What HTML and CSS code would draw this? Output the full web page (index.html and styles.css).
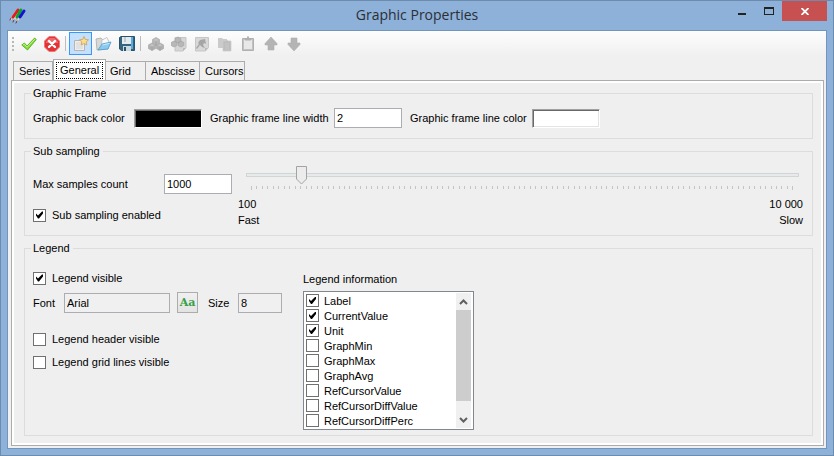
FILE: index.html
```html
<!DOCTYPE html>
<html lang="en">
<head>
<meta charset="utf-8">
<title>Graphic Properties</title>
<link rel="stylesheet" href="styles.css">
</head>
<body>
<div class="window">
  <header class="titlebar">
    <svg class="app-icon" width="18" height="17" viewBox="0 0 18 17">
      <g fill="none" stroke-linecap="round">
        <path d="M2 12l5-7" stroke="#eddcd4" stroke-width="2"/><path d="M4 10l5-7" stroke="#e21c1c" stroke-width="3"/>
        <path d="M5 13l5-7" stroke="#d8d5cb" stroke-width="2"/><path d="M8 10l4-7" stroke="#07a52c" stroke-width="3"/>
        <path d="M8 14l4-5" stroke="#d8cfc8" stroke-width="2"/><path d="M11 10l4-6" stroke="#1512cc" stroke-width="3"/>
        <path d="M1 13l1-2M4 15l1-2M7 16l1-2" stroke="#5d3535" stroke-width="1"/>
      </g>
    </svg>
    <h1 class="title">Graphic Properties</h1>
    <div class="caption-buttons">
      <button class="caption" aria-label="Minimize"><svg width="8" height="12"><path d="M0 8h8v2H0z" fill="#222"/></svg></button>
      <button class="caption" aria-label="Maximize"><svg width="10" height="8"><path d="M0 0h10v8H0zM1 2v5h8V2z" fill="#222" fill-rule="evenodd"/></svg></button>
      <button class="caption close" aria-label="Close"><svg width="8" height="7" viewBox="0 0 8 7"><path d="M.5 0L7.500 7M7.500 0L.5 7" stroke="#fff" stroke-width="1.800"/></svg></button>
    </div>
  </header>
  <main class="client">
    <div class="toolbar">
      <svg class="grip" width="4" height="16"><path d="M1 1h2v2H1zM1 5h2v2H1zM1 9h2v2H1zM1 13h2v2H1z" fill="#b8b8b8"/></svg>
      <button class="tool" aria-label="Apply"><svg width="16" height="16" viewBox="0 0 16 16"><path d="M.8 9l2.600-2 2.600 3L13.600 2l1.700 1.500L6.500 14z" fill="#82dc32" stroke="#4fa51b" stroke-width=".8"/><path d="M2 9l1.300-.8L6 11.200 13.800 3.200" stroke="#c0f583" fill="none"/></svg></button>
      <button class="tool" aria-label="Cancel"><svg width="16" height="16" viewBox="0 0 16 16"><path d="M5 .5h6L15.500 5v6L11 15.500H5L.5 11V5z" fill="#e33134" stroke="#e77"/><path d="M2 7V5.500L5.500 2h5L14 5.500V7z" fill="#f0686b"/><path d="M5 5l6 6M11 5l-6 6" stroke="#fff" stroke-width="2.400" stroke-linecap="round"/></svg></button>
      <span class="separator"></span>
      <button class="tool active" aria-label="New"><svg width="16" height="16" viewBox="0 0 16 16"><path d="M1.500 4.500h10v10h-10z" fill="#eee" stroke="#b5b5b5"/><path d="M3 6h7v7H3z" fill="#e1e1e1"/><path d="M11 .5l1.300 2.900 3.200.4-2.300 2.100.6 3.100L11 7.500 8.200 9l.6-3.100L6.500 3.800l3.200-.4z" fill="#fbdc91" stroke="#cf9f4c" stroke-width=".8"/></svg></button>
      <button class="tool" aria-label="Open"><svg width="17" height="16" viewBox="0 0 17 16"><path d="M1 3l5-1 1 1.500L13 4v9L2 14z" fill="#d7d8d8" stroke="#aaa" stroke-width=".8"/><path d="M7 4l5-2.500L14 6l-2 6H6z" fill="#fafafa" stroke="#bbb" stroke-width=".8"/><path d="M3 14L7 8l9-2-3 7z" fill="#8cc9ef" stroke="#4d9acd" stroke-width=".8"/><path d="M7.500 9l7-1.600" stroke="#c9eafc"/></svg></button>
      <button class="tool" aria-label="Save"><svg width="16" height="16" viewBox="0 0 16 16"><path d="M.5 1.500L2 .5h13.500v14h-13L.5 13z" fill="#34647e" stroke="#28536c"/><path d="M3 1h9v7H3z" fill="#e3e9ec"/><path d="M5 1h2v5H5z" fill="#bdcbd1"/><path d="M12 1h2v12h-2z" fill="#56aee0"/><path d="M4 10h8v5H4z" fill="#cbd8df"/><path d="M5 11h2v4H5z" fill="#28536c"/></svg></button>
      <span class="separator"></span>
      <button class="tool" aria-label="Add curve" disabled><svg width="16" height="16" viewBox="0 0 16 16"><g stroke="#aaa" stroke-width=".7"><path d="M8 1.500l3.500 2v4L8 9.500l-3.500-2v-4z" fill="#b6b6b6"/><path d="M4 7l3.700 2v3.500L4 14.500l-3.700-2V9zM12 7l3.700 2v3.500L12 14.500l-3.700-2V9z" fill="#b0b0b0"/></g><path d="M8 5.500v4M4 10.500v4M12 10.500v4" stroke="#a2a2a2"/><path d="M5.500 4L8 5l2.500-1L8 2.500zM1.500 9.200L4 10.500l2.500-1.300L4 8zM9.500 9.200l2.500 1.300 2.500-1.300L12 8z" fill="#c4c4c4"/></svg></button>
      <button class="tool" aria-label="Duplicate curve" disabled><svg width="16" height="16" viewBox="0 0 16 16"><path d="M4 1.500h11v10l-3 3.500H4z" fill="#d6d6d6" stroke="#c4c4c4"/><g fill="#b8b8b8" stroke="#a4a4a4" stroke-width=".7"><path d="M7 1l2.800 1.500v3L7 7 4.200 5.500v-3zM3 5l2.800 1.500v3L3 11 .2 9.500v-3zM10 5l2.800 1.500v3L10 11 7.200 9.500v-3z"/></g><path d="M12 15v-3h3z" fill="#bbb"/></svg></button>
      <button class="tool" aria-label="Edit curve" disabled><svg width="16" height="16" viewBox="0 0 16 16"><path d="M1.500 1.500h13v10l-3 3.500h-10z" fill="#d8d8d8" stroke="#c6c6c6"/><path d="M6 4l5-1 1 5-2-1-1 2 2 3-3-1-2-2-3 4-1-1 3-4-1-1z" fill="#a6a6a6"/><path d="M11 15v-3h3z" fill="#bbb"/></svg></button>
      <button class="tool" aria-label="Copy" disabled><svg width="16" height="16" viewBox="0 0 16 16"><path d="M1 2h4l1 1h4v9H1z" fill="#cbcbcb"/><path d="M6 5h3l1-1 1 1h3v10H6z" fill="#bdbdbd" stroke="#ccc" stroke-width=".7"/><path d="M3 4v6M9 7v7M11 7v7" stroke="#c9c9c9"/></svg></button>
      <button class="tool" aria-label="Paste" disabled><svg width="16" height="16" viewBox="0 0 16 16"><path d="M2.500 2.500h11v12h-11z" fill="#c2c2c2" stroke="#b0b0b0"/><path d="M4 4h8v9H4z" fill="#e8e8e8"/><path d="M5 2h2V.5h2V2h2v2.500H5z" fill="#b0b0b0"/></svg></button>
      <button class="tool" aria-label="Move up" disabled><svg width="16" height="16" viewBox="0 0 16 16"><path d="M8 1l6 6.500V9h-3v5H5V9H2V7.500z" fill="#b4b4b4" stroke="#b0b0b0" stroke-width=".6"/></svg></button>
      <button class="tool" aria-label="Move down" disabled><svg width="16" height="16" viewBox="0 0 16 16"><path d="M8 15l6-6.500V7h-3V2H5v5H2v1.500z" fill="#b4b4b4" stroke="#b0b0b0" stroke-width=".6"/></svg></button>
    </div>
    <div class="tabs" role="tablist">
      <button class="tab tab-series" role="tab">Series</button>
      <button class="tab tab-general selected" role="tab" aria-selected="true"><span class="focus">General</span></button>
      <button class="tab tab-grid" role="tab">Grid</button>
      <button class="tab tab-abscisse" role="tab">Abscisse</button>
      <button class="tab tab-cursors" role="tab">Cursors</button>
    </div>
    <div class="page" role="tabpanel">
      <fieldset class="group">
        <legend>Graphic Frame</legend>
        <div class="frame-row">
          <label for="back-color">Graphic back color</label>
          <button class="swatch black" id="back-color"></button>
          <label for="line-width">Graphic frame line width</label>
          <input class="field" id="line-width" value="2">
          <label for="line-color">Graphic frame line color</label>
          <button class="swatch white" id="line-color"></button>
        </div>
      </fieldset>
      <fieldset class="group">
        <legend>Sub sampling</legend>
        <div class="sampling">
          <div class="sampling-left">
            <div class="count-row">
              <label for="max-samples">Max samples count</label>
              <input class="field" id="max-samples" value="1000">
            </div>
            <label class="check"><input type="checkbox" checked>Sub sampling enabled</label>
          </div>
          <div class="sampling-right">
            <input class="slider" type="range" min="100" max="10000" step="100" value="1000" aria-label="Max samples count">
            <div class="ticks" id="ticks"></div>
            <div class="scale"><span>100</span><span>10 000</span></div>
            <div class="scale"><span>Fast</span><span>Slow</span></div>
          </div>
        </div>
      </fieldset>
      <fieldset class="group grow">
        <legend>Legend</legend>
        <div class="legend-body">
          <div class="legend-left">
            <label class="check"><input type="checkbox" checked>Legend visible</label>
            <div class="font-row">
              <label class="font-label" for="font-name">Font</label>
              <input class="field font-name" id="font-name" value="Arial" readonly>
              <button class="font-button" aria-label="Choose font">Aa</button>
              <label class="size-label" for="font-size">Size</label>
              <input class="field font-size" id="font-size" value="8" readonly>
            </div>
            <label class="check header-check"><input type="checkbox">Legend header visible</label>
            <label class="check grid-check"><input type="checkbox">Legend grid lines visible</label>
          </div>
          <div class="legend-right">
            <div class="list-title" id="list-title">Legend information</div>
            <div class="list" role="group" aria-labelledby="list-title">
              <div class="items">
                <label class="item"><input type="checkbox" checked>Label</label>
                <label class="item"><input type="checkbox" checked>CurrentValue</label>
                <label class="item"><input type="checkbox" checked>Unit</label>
                <label class="item"><input type="checkbox">GraphMin</label>
                <label class="item"><input type="checkbox">GraphMax</label>
                <label class="item"><input type="checkbox">GraphAvg</label>
                <label class="item"><input type="checkbox">RefCursorValue</label>
                <label class="item"><input type="checkbox">RefCursorDiffValue</label>
                <label class="item"><input type="checkbox">RefCursorDiffPerc</label>
              </div>
              <div class="scrollbar">
                <button class="arrow" aria-label="Scroll up"><svg width="9" height="6"><path d="M1 5l3.500-3.500L8 5" fill="none" stroke="#606060" stroke-width="2"/></svg></button>
                <div class="thumb"></div>
                <button class="arrow" aria-label="Scroll down"><svg width="9" height="6"><path d="M1 1l3.500 3.500L8 1" fill="none" stroke="#606060" stroke-width="2"/></svg></button>
              </div>
            </div>
          </div>
        </div>
      </fieldset>
    </div>
  </main>
</div>
<script src="ticks.js"></script>
</body>
</html>
```
FILE: ticks.js
```js
// One tick for each slider step from 100 to 10 000.
const ticks = document.getElementById("ticks");
for (let value = 100; value <= 10000; value += 100) {
  ticks.appendChild(document.createElement("span"));
}
```
FILE: styles.css
```css
* { box-sizing: border-box; }

body {
  margin: 0;
  font: 11px/14px "Liberation Sans", Arial, sans-serif;
  color: #000;
}

button, input {
  font: inherit;
  color: inherit;
  margin: 0;
  padding: 0;
  border: 0;
  border-radius: 0;
  background: none;
}

svg { display: block; flex: none; }

label { white-space: nowrap; }

.window {
  min-height: 100vh;
  display: flex;
  flex-direction: column;
  padding: 0 6px 6px;
  background: #8db1d9;
  border: 1px solid #6d8bac;
}

/* Title bar */
.titlebar {
  height: 29px;
  display: grid;
  grid-template-columns: 1fr auto 1fr;
  align-items: start;
}
.app-icon { margin: 6px 0 0 2px; }
.title {
  margin: 0;
  font: 14px/28px "Open Sans", "Noto Sans", sans-serif;
  color: #2b2f35;
}
.caption-buttons { display: flex; justify-content: flex-end; }
.caption {
  width: 27px;
  height: 20px;
  display: flex;
  align-items: center;
  justify-content: center;
}
.caption.close { width: 45px; background: #c75050; }

.client {
  flex: 1;
  display: flex;
  flex-direction: column;
  background: #f0f0f0;
  border: 1px solid #7195bb;
}

/* Toolbar */
.toolbar {
  height: 25px;
  display: flex;
  align-items: center;
  padding-left: 3px;
  background: linear-gradient(#fdfdfd, #f0f0f0);
}
.grip { margin-right: 2px; }
.tool {
  width: 23px;
  height: 23px;
  display: flex;
  align-items: center;
  justify-content: center;
}
.tool.active { background: #c4e0fc; border: 1px solid #3399ff; }
.separator { width: 1px; height: 15px; margin: 0 3px 0 2px; background: #bdbdbd; }

/* Tabs */
.tabs {
  height: 24px;
  display: flex;
  align-items: flex-end;
  padding-left: 5px;
}
.tab {
  height: 19px;
  padding-left: 5px;
  text-align: left;
  border: 1px solid #acacac;
  border-bottom: 0;
  border-left-width: 0;
}
.tab-series { width: 40px; border-left-width: 1px; }
.tab-general { width: 53px; }
.tab-grid { width: 40px; padding-left: 4px; }
.tab-abscisse { width: 54px; }
.tab-cursors { width: 45px; }
.tab.selected {
  height: 22px;
  margin-bottom: -1px;
  padding: 0 2px;
  background: #fff;
  border-left-width: 1px;
}
.focus {
  display: block;
  padding-left: 3px;
  line-height: 15px;
  border: 1px dotted #000;
}

.page {
  flex: 1;
  display: flex;
  flex-direction: column;
  gap: 5px;
  margin: 0 2px 2px 3px;
  padding: 5px 10px 9px 12px;
  background: #efefef;
  border: 1px solid #acacac;
  box-shadow: inset 0 0 0 2px #fff;
}

/* Groups */
.group {
  min-width: 0;
  margin: 0;
  padding: 0 9px 0 8px;
  border: 1px solid #dcdcdc;
}
.group legend { padding: 0 3px 0 2px; margin-left: -2px; }
.group.grow { flex: 1; }

.field {
  width: 68px;
  height: 20px;
  padding: 0 2px;
  background: #fff;
  border: 1px solid #abadb3;
}
.field:read-only { background: #f0f0f0; }

.frame-row {
  display: grid;
  grid-template-columns: 101px 76px 124px 76px 122px 68px;
  align-items: center;
  padding: 8px 0 10px;
}
.swatch {
  width: 68px;
  height: 19px;
  border: 1px solid;
  border-color: #a0a0a0 #fff #fff #a0a0a0;
}
.swatch.black { background: #000; box-shadow: inset 1px 1px #696969; }
.swatch.white { background: #fff; box-shadow: inset 1px 1px #696969, inset -1px -1px #e3e3e3; }

.check, .item { display: flex; align-items: center; }
.check { gap: 6px; height: 14px; }

input[type="checkbox"] {
  appearance: none;
  flex: none;
  width: 13px;
  height: 13px;
  background: #fff;
  border: 1px solid #707070;
}
input[type="checkbox"]:checked::before {
  content: "";
  display: block;
  width: 11px;
  height: 11px;
  background: #000;
  clip-path: polygon(2px 4px, 4px 6px, 8px 2px, 9px 2px, 9px 4px, 5px 9px, 4px 9px, 2px 6px);
}

/* Sub sampling */
.sampling { display: flex; padding-bottom: 7px; }
.sampling-left { width: 205px; padding-top: 16px; }
.count-row { display: flex; align-items: center; margin-bottom: 14px; }
.count-row label { width: 131px; }
.sampling-right { flex: 1; padding-top: 7px; }
.slider {
  appearance: none;
  display: block;
  width: calc(100% - 12px);
  height: 19px;
  margin-left: 8px;
}
.slider::-webkit-slider-runnable-track {
  height: 4px;
  background: #e7eaea;
  border: 1px solid #d0d6d6;
}
.slider::-webkit-slider-thumb {
  appearance: none;
  width: 11px;
  height: 19px;
  margin-top: -8px;
  background: url("data:image/svg+xml,%3Csvg xmlns='http://www.w3.org/2000/svg' width='11' height='19'%3E%3Cpath d='M.5 .5h10v12.500l-5 5-5-5z' fill='%23ececec' stroke='%23a3a3a3'/%3E%3C/svg%3E");
}
.ticks {
  height: 4px;
  display: flex;
  justify-content: space-between;
  margin: 2px 9px 6px 13px;
}
.ticks span { width: 1px; height: 3px; background: #c4c4c4; }
.ticks span:first-child, .ticks span:last-child { height: 4px; }
.scale { display: flex; justify-content: space-between; line-height: 16px; }

/* Legend */
.legend-body { display: flex; }
.legend-left { width: 270px; padding-top: 16px; }
.font-row { display: flex; align-items: center; margin-top: 7px; height: 21px; }
.font-label { width: 31px; }
.font-name { width: 106px; margin-right: 7px; }
.font-button {
  width: 21px;
  height: 21px;
  margin-right: 10px;
  background: linear-gradient(#f0f0f0, #e3e3e3);
  border: 1px solid #acacac;
  color: #35a045;
  font: bold 11px/19px "DejaVu Serif", serif;
}
.size-label { width: 30px; }
.font-size { width: 44px; }
.header-check { margin-top: 19px; }
.grid-check { margin-top: 9px; }

.legend-right { padding-top: 17px; }
.list-title { margin-bottom: 5px; }
.list {
  width: 171px;
  display: flex;
  padding: 1px;
  background: #fff;
  border: 1px solid #828790;
}
.items { flex: 1; padding-left: 1px; }
.item { height: 15px; gap: 5px; }
.scrollbar {
  width: 15px;
  display: flex;
  flex-direction: column;
  margin-right: 1px;
  background: #f0f0f0;
}
.arrow { height: 17px; display: flex; align-items: center; justify-content: center; }
.thumb { height: 91px; margin-bottom: auto; background: #cdcdcd; }
```
